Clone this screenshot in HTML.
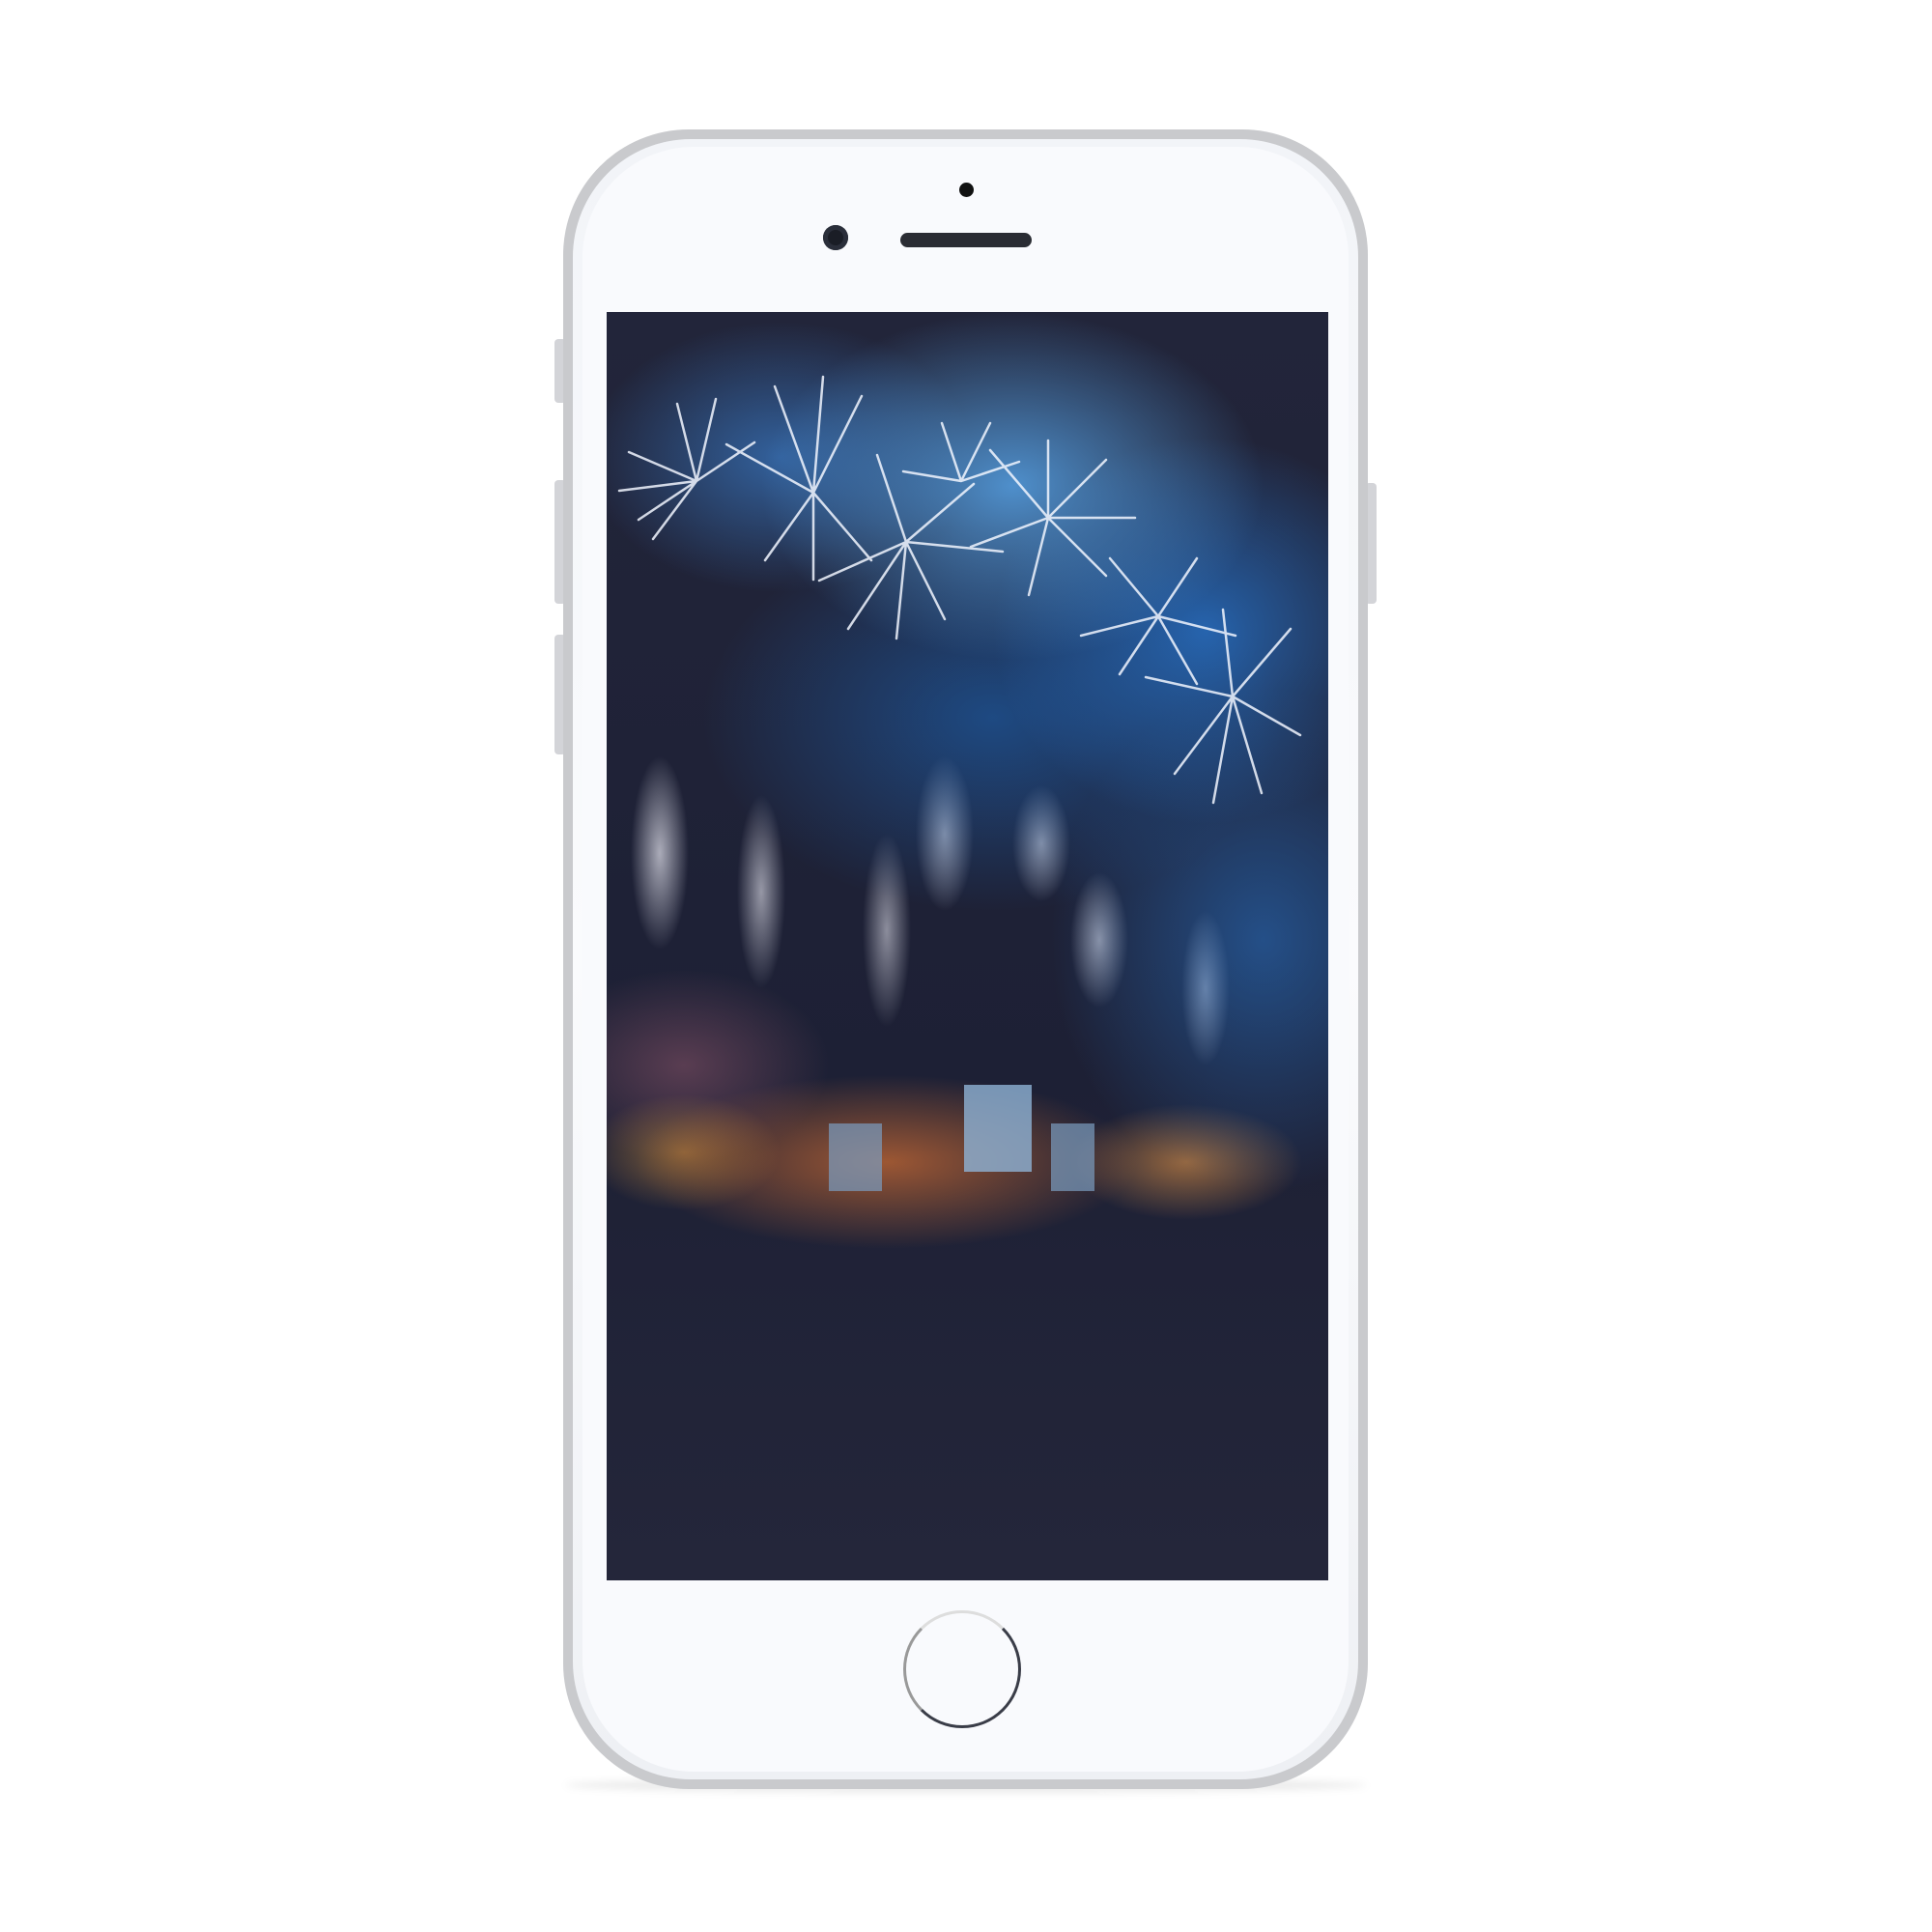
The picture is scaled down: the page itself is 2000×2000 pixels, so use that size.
<!DOCTYPE html>
<html><head><style>
html,body{margin:0;padding:0;background:#fff;width:2000px;height:2000px;overflow:hidden}
.a{position:absolute}
</style></head><body>
<div class="a" style="left:574px;top:351px;width:12px;height:66px;background:#d3d4d8;border-radius:4px"></div>
<div class="a" style="left:574px;top:497px;width:12px;height:128px;background:#d3d4d8;border-radius:4px"></div>
<div class="a" style="left:574px;top:657px;width:12px;height:124px;background:#d3d4d8;border-radius:4px"></div>
<div class="a" style="left:1413px;top:500px;width:12px;height:125px;background:#d3d4d8;border-radius:4px"></div>
<div class="a" style="left:585px;top:1840px;width:830px;height:16px;border-radius:50%;background:rgba(0,0,0,0.08);filter:blur(4px)"></div>
<div class="a" style="left:583px;top:134px;width:833px;height:1718px;border-radius:130px;background:#c9cacd"></div>
<div class="a" style="left:593px;top:144px;width:813px;height:1698px;border-radius:122px;background:linear-gradient(#f2f4f8,#fafbfd 50%,#eef0f4)"></div>
<div class="a" style="left:603px;top:152px;width:793px;height:1682px;border-radius:115px;background:#f9fafd"></div>
<div class="a" style="left:993px;top:189px;width:15px;height:15px;border-radius:50%;background:#111"></div>
<div class="a" style="left:852px;top:233px;width:26px;height:26px;border-radius:50%;background:#1a1d26;box-shadow:inset 0 0 0 5px #2a2e3a"></div>
<div class="a" style="left:932px;top:241px;width:136px;height:15px;border-radius:8px;background:#2a2c33"></div>
<div class="a" style="left:628px;top:323px;width:747px;height:1313px;overflow:hidden;background:#1e1f2e">
 <div class="a" style="inset:0;background:
  radial-gradient(ellipse 260px 180px at 420px 180px,rgba(90,170,240,0.8),transparent),
  radial-gradient(ellipse 200px 140px at 180px 150px,rgba(60,130,210,0.65),transparent),
  radial-gradient(ellipse 220px 200px at 620px 330px,rgba(40,120,210,0.75),transparent),
  radial-gradient(ellipse 300px 200px at 400px 420px,rgba(30,100,180,0.6),transparent),
  radial-gradient(ellipse 220px 260px at 680px 650px,rgba(40,110,190,0.6),transparent),
  radial-gradient(ellipse 30px 100px at 55px 560px,rgba(230,230,240,0.7),transparent),
  radial-gradient(ellipse 25px 100px at 160px 600px,rgba(230,230,240,0.6),transparent),
  radial-gradient(ellipse 25px 100px at 290px 640px,rgba(230,230,240,0.55),transparent),
  radial-gradient(ellipse 30px 80px at 350px 540px,rgba(230,230,240,0.6),transparent),
  radial-gradient(ellipse 30px 60px at 450px 550px,rgba(230,230,240,0.6),transparent),
  radial-gradient(ellipse 30px 70px at 510px 650px,rgba(230,230,240,0.6),transparent),
  radial-gradient(ellipse 25px 80px at 620px 700px,rgba(230,230,240,0.55),transparent),
  radial-gradient(ellipse 260px 90px at 290px 880px,rgba(210,110,50,0.7),transparent),
  radial-gradient(ellipse 120px 60px at 600px 880px,rgba(230,150,70,0.6),transparent),
  radial-gradient(ellipse 100px 60px at 80px 870px,rgba(200,140,60,0.6),transparent),
  radial-gradient(ellipse 150px 100px at 80px 780px,rgba(150,90,110,0.5),transparent),
  linear-gradient(#22253a,#1d2035 60%,#24263a)"></div>
 <svg class="a" style="left:0;top:0" width="747" height="1313" stroke="#f2f6ff" stroke-width="2.5" stroke-linecap="round" opacity="0.85">
  <g transform="translate(93,175)"><path d="M0 0L-70-30M0 0L-60 40M0 0L-20-80M0 0L20-85M0 0L-80 10M0 0L-45 60M0 0L60-40"/></g>
  <g transform="translate(214,187)"><path d="M0 0L-40-110M0 0L10-120M0 0L50-100M0 0L-90-50M0 0L60 70M0 0L0 90M0 0L-50 70"/></g>
  <g transform="translate(310,238)"><path d="M0 0L-90 40M0 0L-60 90M0 0L-10 100M0 0L40 80M0 0L70-60M0 0L-30-90M0 0L100 10"/></g>
  <g transform="translate(367,175)"><path d="M0 0L-20-60M0 0L30-60M0 0L60-20M0 0L-60-10"/></g>
  <g transform="translate(457,213)"><path d="M0 0L-60-70M0 0L0-80M0 0L60-60M0 0L90 0M0 0L60 60M0 0L-20 80M0 0L-80 30"/></g>
  <g transform="translate(571,315)"><path d="M0 0L-80 20M0 0L-50-60M0 0L40-60M0 0L80 20M0 0L40 70M0 0L-40 60"/></g>
  <g transform="translate(648,398)"><path d="M0 0L-90-20M0 0L-60 80M0 0L-20 110M0 0L30 100M0 0L70 40M0 0L60-70M0 0L-10-90"/></g>
 </svg>
 <div class="a" style="left:370px;top:800px;width:70px;height:90px;background:#8fb3d6;opacity:.8"></div>
 <div class="a" style="left:230px;top:840px;width:55px;height:70px;background:#7a9cc0;opacity:.7"></div>
 <div class="a" style="left:460px;top:840px;width:45px;height:70px;background:#7a9cc0;opacity:.7"></div>
</div>
<div class="a" style="left:935px;top:1667px;width:122px;height:122px;border-radius:50%;border:3px solid #3a3d48;box-sizing:border-box;border-top-color:#ddd;border-left-color:#999"></div>
</body></html>
